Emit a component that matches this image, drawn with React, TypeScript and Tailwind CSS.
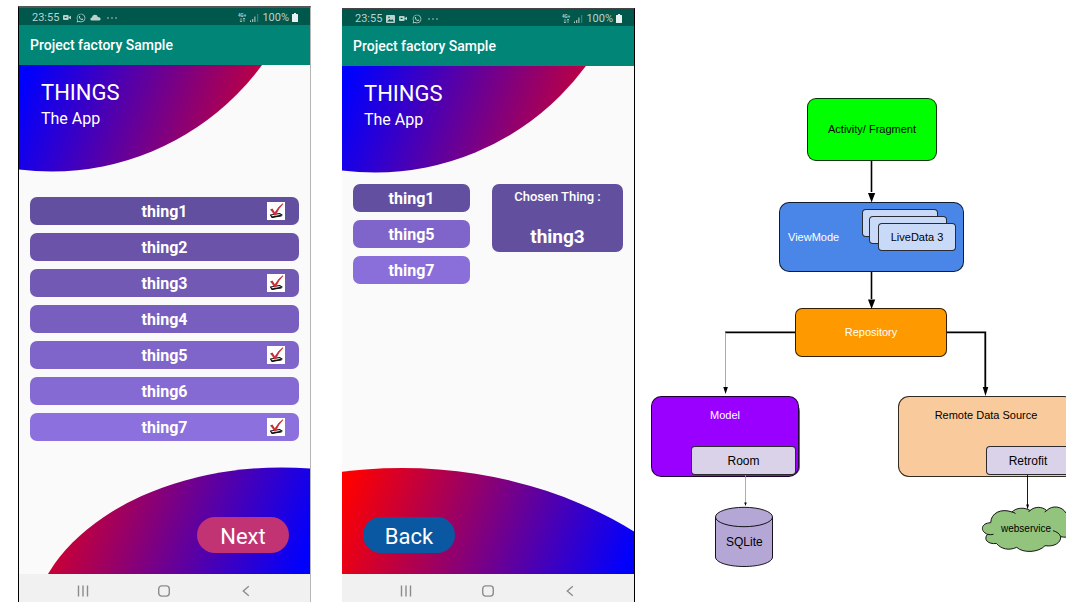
import type { ReactNode } from "react";
import { FaWhatsapp } from "react-icons/fa";

type StatusBarProps = { withPhoto?: boolean };

function StatusBar({ withPhoto = false }: StatusBarProps) {
  return (
    <div className="flex h-[17px] items-center justify-between bg-[#00574b] pt-[2px] pr-3 pl-[13px] text-[11px] leading-[15px] text-[#b9d3ce]">
      <div className="flex items-center gap-1">
        <span>23:55</span>
        {withPhoto && <PhotoIcon />}
        <CameraIcon />
        <FaWhatsapp className="ml-px size-[10px]" />
        {!withPhoto && <CloudIcon />}
        <svg viewBox="0 0 12 4" className="ml-px h-1 w-3" fill="currentColor" aria-hidden="true">
          <circle cx="2" cy="2" r="0.8" />
          <circle cx="6" cy="2" r="0.8" />
          <circle cx="10" cy="2" r="0.8" />
        </svg>
      </div>
      <div className="flex items-center gap-[3px]">
        <svg viewBox="0 0 9 9" className="size-[9px]" aria-hidden="true">
          <text x="0" y="4" fontSize="4.5" fontWeight="700" fill="currentColor">4G+</text>
          <path d="M3 5v4M1.8 7.8 3 9l1.2-1.2M6 9V5M4.800 6.2 6 5l1.2 1.2" stroke="currentColor" strokeWidth="0.7" fill="none" />
        </svg>
        <svg viewBox="0 0 9 9" className="size-[9px]" fill="currentColor" aria-hidden="true">
          <path d="M0 7.5h1v1.500H0zM2.2 6h1v3h-1zM4.400 3.500h1V9h-1z" />
          <path d="M7.2 1h1v8h-1z" opacity="0.4" />
        </svg>
        <span>100%</span>
        <svg viewBox="0 0 6 9" className="h-[9px] w-[6px]" fill="#e8f1ef" aria-hidden="true">
          <path d="M2 0h2v1h1.500q.5 0 .5.500V8.500q0 .5-.5.500h-5Q0 9 0 8.500v-7Q0 1 .5 1H2z" />
        </svg>
      </div>
    </div>
  );
}

function PhotoIcon() {
  return (
    <svg viewBox="0 0 9 8" className="h-2 w-[9px]" aria-hidden="true">
      <rect width="9" height="8" rx="1" fill="currentColor" />
      <path d="M1.2 6.5 3.5 4l1.500 1.3L6.3 4.2 8 6.5z" fill="#00574b" />
      <circle cx="3" cy="2.3" r="0.8" fill="#00574b" />
    </svg>
  );
}

function CameraIcon() {
  return (
    <svg viewBox="0 0 8 5" className="h-[5px] w-2" fill="currentColor" aria-hidden="true">
      <rect width="5.600" height="5" rx="1" />
      <path d="M5 2.500 8 .7v3.600z" />
      <rect x="1.600" y="1.800" width="2" height="1.200" fill="#00574b" />
    </svg>
  );
}

function CloudIcon() {
  return (
    <svg viewBox="0 0 11 7" className="h-[7px] w-[11px]" fill="currentColor" aria-hidden="true">
      <path d="M2 6.500Q.3 6.500.3 5T2 3.500Q2.500.7 5 .7T7.800 3Q10.600 3 10.700 4.800T9 6.500z" />
    </svg>
  );
}

function NavBar() {
  return (
    <nav className="flex h-7 items-center justify-around bg-[#f1f1f1] px-[23px] pt-[5px] text-[#8c8c8c]">
      <button type="button" aria-label="Recent apps">
        <svg viewBox="0 0 12 12" className="size-3" stroke="currentColor" strokeWidth="1.4" aria-hidden="true">
          <path d="M1.5 0.5v11M6 0.5v11M10.5 0.5v11" />
        </svg>
      </button>
      <button type="button" aria-label="Home">
        <svg viewBox="0 0 12 12" className="size-3" stroke="currentColor" strokeWidth="1.4" fill="none" aria-hidden="true">
          <rect x="0.7" y="0.9" width="10.6" height="10.2" rx="3" />
        </svg>
      </button>
      <button type="button" aria-label="Back">
        <svg viewBox="0 0 12 12" className="size-3" stroke="currentColor" strokeWidth="1.4" fill="none" aria-hidden="true">
          <path d="M8.800 1.2 3.300 6l5.500 4.800" />
        </svg>
      </button>
    </nav>
  );
}

function HeaderCurve({ id }: { id: string }) {
  return (
    <div className="relative h-[107px]">
      <svg viewBox="0 0 292 107" preserveAspectRatio="none" className="absolute inset-0 size-full" aria-hidden="true">
        <defs>
          <linearGradient id={id} gradientUnits="userSpaceOnUse" x1="0" y1="0" x2="292" y2="107">
            <stop offset="0.03" stopColor="#0000ff" />
            <stop offset="1" stopColor="#ff0000" />
          </linearGradient>
        </defs>
        <circle cx="33" cy="-155.5" r="262" fill={`url(#${id})`} />
      </svg>
      <div className="relative px-[22px] pt-[13px] text-white">
        <h1 className="text-[22px] leading-[30px]">THINGS</h1>
        <p className="text-[16px] leading-[22px]">The App</p>
      </div>
    </div>
  );
}

type PhoneProps = {
  gradientId: string;
  withPhoto?: boolean;
  frame: string;
  children: ReactNode;
};

function Phone({ gradientId, withPhoto, frame, children }: PhoneProps) {
  return (
    <section className={`flex min-w-0 flex-1 flex-col overflow-hidden bg-[#fafafa] ${frame}`}>
      <StatusBar withPhoto={withPhoto} />
      <header className="flex h-10 items-center bg-[#008577] pt-px pl-[11px] text-[14px] font-medium text-white">
        Project factory Sample
      </header>
      <HeaderCurve id={gradientId} />
      {children}
      <NavBar />
    </section>
  );
}

function TickMark() {
  return (
    <svg viewBox="0 0 18 18" className="size-[18px]" aria-hidden="true">
      <rect width="18" height="18" fill="#fff" />
      <path d="M3.500 13 12.500 11.5 15 13 5 15.300z" fill="#fff" stroke="#111" strokeWidth="1.2" strokeLinejoin="round" />
      <path d="M5 15.200 14.500 13.800" stroke="#111" strokeWidth="1.3" />
      <path d="M3 7.500 5.500 6.500 7.800 10.200Q11 4.500 15.800 1.200L16.300 2Q11.500 6.500 8.800 13.500L7.300 13.500Q5.500 10 3 7.500z" fill="#c8323a" />
    </svg>
  );
}

const things = [
  { name: "thing1", tone: "bg-[#624f9f]", ticked: true },
  { name: "thing2", tone: "bg-[#6a53a9]", ticked: false },
  { name: "thing3", tone: "bg-[#7159b4]", ticked: true },
  { name: "thing4", tone: "bg-[#785fbf]", ticked: false },
  { name: "thing5", tone: "bg-[#7f65c9]", ticked: true },
  { name: "thing6", tone: "bg-[#866ad3]", ticked: false },
  { name: "thing7", tone: "bg-[#8c70dd]", ticked: true },
];

const picked = [
  { name: "thing1", tone: "bg-[#624f9f]" },
  { name: "thing5", tone: "bg-[#7f65c9]" },
  { name: "thing7", tone: "bg-[#8a6fdb]" },
];

function ListScreen() {
  return (
    <>
      <ul className="grid gap-2 px-[11px] pt-[25px]">
        {things.map((t) => (
          <li key={t.name}>
            <button
              type="button"
              aria-pressed={t.ticked}
              className={`grid h-7 w-full grid-cols-[1fr_auto_1fr] items-center rounded-[7px] px-[14px] text-[16px] font-bold text-white ${t.tone}`}
            >
              <span className="col-start-2 pt-[2px]">{t.name}</span>
              {t.ticked && <span className="justify-self-end"><TickMark /></span>}
            </button>
          </li>
        ))}
      </ul>
      <div className="relative mt-auto flex h-[107px] items-end justify-end pr-[21px] pb-[21px]">
        <svg viewBox="0 0 292 107" preserveAspectRatio="none" className="absolute inset-0 size-full" aria-hidden="true">
          <defs>
            <linearGradient id="list-foot" gradientUnits="userSpaceOnUse" x1="292" y1="107" x2="0" y2="0">
              <stop offset="0.03" stopColor="#0000ff" />
              <stop offset="1" stopColor="#ff0000" />
            </linearGradient>
          </defs>
          <ellipse cx="263" cy="170" rx="252" ry="169.5" fill="url(#list-foot)" />
        </svg>
        <button type="button" className="relative h-9 w-[92px] rounded-full bg-[#c23373] pt-[2px] text-[22px] text-white">
          Next
        </button>
      </div>
    </>
  );
}

function DetailScreen() {
  return (
    <>
      <div className="grid grid-cols-[117fr_131fr] items-start gap-[22px] px-[11px] pt-[11px] text-white">
        <ul className="grid gap-2">
          {picked.map((t) => (
            <li key={t.name}>
              <button type="button" className={`h-7 w-full rounded-[7px] pt-[2px] text-[16px] font-bold ${t.tone}`}>
                {t.name}
              </button>
            </li>
          ))}
        </ul>
        <div className="flex h-[68px] flex-col items-center justify-between rounded-[7px] bg-[#62509f] pt-1 pb-px">
          <p className="text-[13px] leading-[18px] font-medium">Chosen Thing :</p>
          <p className="text-[19px] leading-7 font-bold">thing3</p>
        </div>
      </div>
      <div className="relative mt-auto flex h-[107px] items-end pb-[21px] pl-[21px]">
        <svg viewBox="0 0 292 107" preserveAspectRatio="none" className="absolute inset-0 size-full" aria-hidden="true">
          <defs>
            <linearGradient id="detail-foot" gradientUnits="userSpaceOnUse" x1="0" y1="0" x2="292" y2="107">
              <stop offset="0.03" stopColor="#ff0000" />
              <stop offset="0.97" stopColor="#0000ff" />
            </linearGradient>
          </defs>
          <ellipse cx="60" cy="301" rx="377" ry="300" fill="url(#detail-foot)" />
        </svg>
        <button type="button" className="relative h-9 w-[92px] rounded-full bg-[#0b58a2] pt-[2px] text-[22px] text-white">
          Back
        </button>
      </div>
    </>
  );
}

function Node({ place, children }: { place: string; children?: ReactNode }) {
  return (
    <div className={`absolute flex items-center justify-center border border-black/80 whitespace-nowrap ${place}`}>
      {children}
    </div>
  );
}

function Architecture() {
  return (
    <section className="relative h-[568px] min-w-0 flex-[415] overflow-hidden font-['Liberation_Sans',Arial,sans-serif] text-[11px] text-black">
      <Node place="left-[156px] top-[98px] h-[63px] w-[130px] rounded-[9px] bg-[#00ff00]">Activity/ Fragment</Node>

      <Node place="left-[128px] top-[202px] h-[70px] w-[185px] rounded-[10px] bg-[#4a86e8]" />
      <span className="absolute top-[229px] left-[137px] leading-4 text-white">ViewMode</span>
      <Node place="left-[211px] top-[209px] h-7 w-[76px] rounded-[4px] bg-[#c9daf8]" />
      <Node place="left-[218px] top-[216px] h-7 w-[78px] rounded-[4px] bg-[#c9daf8]" />
      <Node place="left-[227px] top-[223px] h-7 w-[78px] rounded-[4px] bg-[#c9daf8]">LiveData 3</Node>

      <Node place="left-[144px] top-[308px] h-[49px] w-[152px] rounded-[7px] bg-[#ff9900] text-white">Repository</Node>

      <div className="absolute top-[403px] left-[5px] h-[72px] w-[144px] rounded-[8px] bg-[#666]" />
      <Node place="left-0 top-[396px] h-[81px] w-[148px] rounded-[10px] bg-[#9900ff] text-white">
        <span className="self-start pt-[10px]">Model</span>
      </Node>
      <Node place="left-[40px] top-[446px] h-[29px] w-[105px] rounded-[4px] bg-[#d9d2e9] text-[12px]">Room</Node>

      <Node place="left-[247px] top-[396px] h-[81px] w-[177px] rounded-[11px] bg-[#f9cb9c]">
        <span className="self-start pt-[10px] pr-px">Remote Data Source</span>
      </Node>
      <Node place="left-[335px] top-[446px] h-[29px] w-[92px] rounded-[4px] bg-[#d9d2e9] pr-2 text-[12px]">Retrofit</Node>

      <svg viewBox="0 0 415 568" className="absolute top-0 left-0 h-[568px] w-[415px]" fill="none" stroke="#000" aria-hidden="true">
        <path d="M220.5 161v31M220.5 272v27" strokeWidth="1.6" />
        <path d="M144 332.300H74" strokeWidth="1.8" />
        <path d="M74.500 332.5V388" stroke="#aaa" strokeWidth="1" />
        <path d="M296 332.300h38.300V388" strokeWidth="1.8" />
        <path d="M94.500 475v29" stroke="#999" strokeWidth="0.8" />
        <path d="M376.500 475v31" strokeWidth="0.9" />
        <g fill="#000" stroke="none">
          <path d="M217 193h7.200l-3.600 9.500zM217 299.500h7.200l-3.600 9.500zM331.700 387h5.600l-2.800 9zM72.300 387h4.600l-2.300 7zM93.200 502.5h2.600L94.500 506zM375.200 504.5h2.800l-1.400 5z" />
        </g>
        <path d="M64.500 517v40c0 5.500 12.800 9.500 28.500 9.500s28.500-4 28.500-9.500v-40" fill="#b4a7d6" strokeWidth="0.9" />
        <ellipse cx="93" cy="517" rx="28.500" ry="9.700" fill="#b4a7d6" strokeWidth="0.9" />
        <path
          d="M339.700 522.7C340 513 350 508 361 512C365 507.500 374 507 379 510.500C384 506.300 391 506.300 395.700 510.500C401 505 411 506 415 513C424 516 426 521 419 527C428 533 422 539 409.700 536.700C410 543 403 547 394 545.700C388 552.500 372 553.500 365.700 547.300C358 551 350 549 345.500 543.500C337 544.500 332 539.500 336.500 534.300C329 531.500 329.500 523 339.700 522.700z"
          fill="#93c47d"
          strokeWidth="0.9"
        />
        <path d="M336.500 534.300q3 .8 6 0M402 530.700q6 1.500 7.700 6M361 512q2 .4 3.500 1.500M379 510.500l-1.500 1.500M395.700 510.500l-2 1.500" strokeWidth="0.9" />
      </svg>
      <span className="absolute top-[534px] left-[75px] text-[12px] leading-4">SQLite</span>
      <span className="absolute top-[521px] left-[350px] text-[10px] leading-4">webservice</span>
    </section>
  );
}

export default function App() {
  return (
    <main className="flex min-h-screen gap-4 bg-white pr-[15px] pl-[18px] font-[Roboto,sans-serif]">
      <div className="flex min-w-0 flex-[617] gap-[31px]">
        <div className="flex min-w-0 flex-1 pt-[6px]">
          <Phone gradientId="list-head" frame="border-t-2 border-r border-l border-t-[#555] border-r-[#b5b5b5] border-l-black">
            <ListScreen />
          </Phone>
        </div>
        <div className="flex min-w-0 flex-1 pt-2">
          <Phone gradientId="detail-head" withPhoto frame="border-t border-r border-t-[#444] border-r-black">
            <DetailScreen />
          </Phone>
        </div>
      </div>
      <Architecture />
    </main>
  );
}
